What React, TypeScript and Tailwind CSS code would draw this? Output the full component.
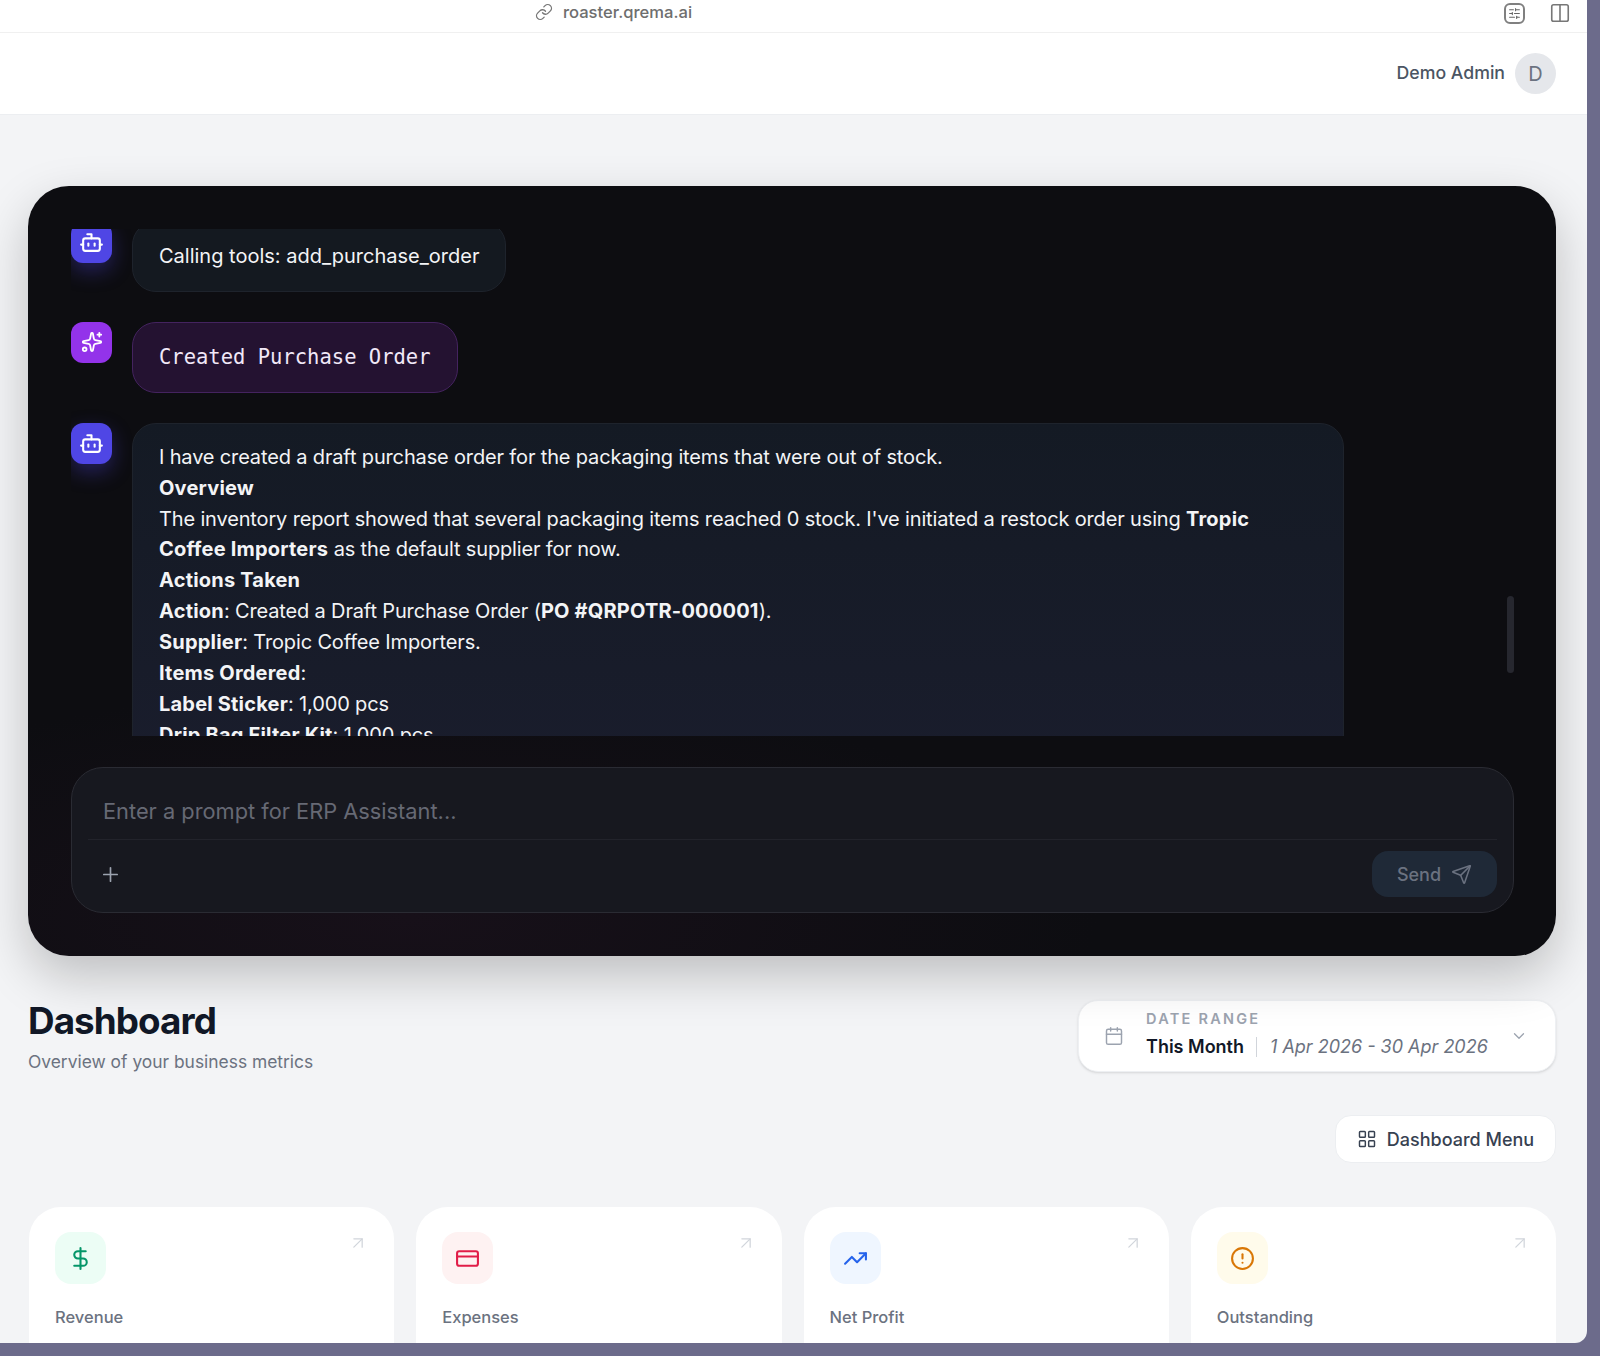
import { ArrowUpRight, Bot, Calendar, ChevronDown, CircleAlert, Columns2, CreditCard, DollarSign, LayoutGrid, Link, Plus, Send, SlidersHorizontal, Sparkles, TrendingUp } from "lucide-react";

const cards = [
  { label: "Revenue", icon: DollarSign, tile: "bg-[#ecfdf5]", color: "text-[#059669]" },
  { label: "Expenses", icon: CreditCard, tile: "bg-[#fef2f2]", color: "text-[#e11d48]" },
  { label: "Net Profit", icon: TrendingUp, tile: "bg-[#eff6ff]", color: "text-[#2563eb]" },
  { label: "Outstanding", icon: CircleAlert, tile: "bg-[#fffbeb]", color: "text-[#d97706]" },
];

const BotAvatar = () => (
  <div className="flex size-[41px] shrink-0 items-center justify-center rounded-xl bg-[#4f46e5] text-white shadow-[0_8px_20px_rgba(79,70,229,0.35)]">
    <Bot className="size-[25px]" strokeWidth={2} />
  </div>
);

const Strong = ({ children }: { children: string }) => (
  <b className="font-bold tracking-[0.2px]">{children}</b>
);

const Chat = () => (
  <div className="relative rounded-[41px] bg-[#0d0d11] bg-[radial-gradient(ellipse_45%_30%_at_25%_95%,#171019_0%,transparent_100%)] pt-[43px] pr-[42px] pb-[43px] pl-[43px] shadow-[0_20px_50px_rgba(0,0,0,0.22)]">
    <div className="h-[507px] overflow-hidden">
      <div className="-mt-[8px] flex flex-col gap-[30px] text-[20px] leading-[30.87px] tracking-[-0.15px] text-[#f3f4f6]">
        <div className="flex items-start gap-[20px]">
          <div className="mt-px"><BotAvatar /></div>
          <div className="rounded-3xl border border-[#1e232c] bg-[#141920] px-[26px] py-[19px] tracking-normal">Calling tools: add_purchase_order</div>
        </div>
        <div className="flex items-start gap-[20px]">
          <div className="flex size-[41px] shrink-0 items-center justify-center rounded-xl bg-[#9333ea] text-white">
            <Sparkles className="size-[22px]" strokeWidth={2} />
          </div>
          <div className="rounded-3xl border border-[#44235f] bg-[#241231] px-[26px] py-[19px] font-['DejaVu_Sans_Mono',monospace] text-[20.5px] tracking-normal text-[#f1e8f8]">Created Purchase Order</div>
        </div>
        <div className="flex items-start gap-[20px]">
          <BotAvatar />
          <div className="w-[1212px] rounded-t-3xl border border-[#1e232c] bg-gradient-to-b from-[#141a24] to-[#1a1d2d] px-[26px] pt-[18px] pb-[40px]">
            <p>I have created a draft purchase order for the packaging items that were out of stock.</p>
            <p><Strong>Overview</Strong></p>
            <p>The inventory report showed that several packaging items reached 0 stock. I've initiated a restock order using <Strong>Tropic Coffee Importers</Strong> as the default supplier for now.</p>
            <p><Strong>Actions Taken</Strong></p>
            <p><Strong>Action</Strong>: Created a Draft Purchase Order (<Strong>PO #QRPOTR-000001</Strong>).</p>
            <p><Strong>Supplier</Strong>: Tropic Coffee Importers.</p>
            <p><Strong>Items Ordered</Strong>:</p>
            <p><Strong>Label Sticker</Strong>: 1,000 pcs</p>
            <p><Strong>Drip Bag Filter Kit</Strong>: 1,000 pcs</p>
          </div>
        </div>
      </div>
    </div>

    {/* scrollbar thumb */}
    <div className="absolute top-[410px] right-[42px] h-[77px] w-[7px] rounded-full bg-[#26272f]" />

    <div className="mt-[31px] h-[146px] rounded-[32px] border border-[#2a2b33] bg-[#17181f] px-4">
      <div className="flex h-[72px] items-center border-b border-[#22232b] px-[15px] pt-[15px] text-[21.8px] text-[#666974]">Enter a prompt for ERP Assistant...</div>
      <div className="flex items-center justify-between pt-[11px]">
        <Plus className="ml-[11px] size-[23px] text-[#9ca3af]" strokeWidth={1.75} />
        <div className="flex h-[46px] w-[125px] items-center justify-center gap-[10px] rounded-2xl bg-[#1f2937] text-[18px] font-medium text-[#6b7280]">
          Send
          <Send className="size-[21px]" strokeWidth={1.75} />
        </div>
      </div>
    </div>
  </div>
);

export default function App() {
  return (
    <div className="h-[1356px] w-[1600px] overflow-hidden bg-[#6c6b8b] font-['Inter',sans-serif]">
      <div className="h-[1343px] w-[1587px] overflow-hidden rounded-br-xl bg-[#f3f4f6]">
        {/* browser bar */}
        <div className="relative flex h-[33px] items-center justify-center border-b border-[#f0f0f0] bg-white pb-2 text-[#6e6e6e]">
          <div className="mr-[360px] flex items-center gap-[10px] text-[16.6px] font-medium">
            <Link className="size-[18px] text-[#777]" strokeWidth={1.75} />
            roaster.qrema.ai
          </div>
          <div className="absolute top-[2px] right-[16px] flex items-center gap-[24px]">
            <div className="flex size-[21px] items-center justify-center rounded-[6px] border-2 border-[#808080]">
              <SlidersHorizontal className="size-[13px] text-[#666]" strokeWidth={2} />
            </div>
            <Columns2 className="size-[22px] text-[#777]" strokeWidth={1.75} />
          </div>
        </div>

        {/* header */}
        <div className="flex h-[82px] items-center justify-end gap-[10px] border-b border-[#eceef1] bg-white pr-[31px]">
          <span className="text-[17.7px] font-medium text-[#4b5563]">Demo Admin</span>
          <div className="flex size-[41px] items-center justify-center rounded-full bg-[#e5e7eb] text-[20px] text-[#6b7280]">D</div>
        </div>

        <div className="pt-[71px] pr-[31px] pl-[28px]">
          <Chat />

          <div className="mt-[44px] flex items-start justify-between">
            <div>
              <h1 className="text-[36.8px] leading-[42px] font-bold tracking-tight text-[#111827]">Dashboard</h1>
              <p className="mt-[7px] text-[17.4px] text-[#6b7280]">Overview of your business metrics</p>
            </div>
            <div className="flex h-[72px] w-[478px] items-center rounded-[20px] border border-[#eef0f3] bg-white pr-[27px] pl-[25px] shadow-sm">
              <Calendar className="size-[20px] text-[#9ca3af]" strokeWidth={1.75} />
              <div className="ml-[22px] flex-1">
                <div className="-mt-[3px] text-[14.5px] leading-[18px] font-semibold tracking-[0.155em] text-[#9ca3af]">DATE RANGE</div>
                <div className="mt-[6px] flex items-center text-[18px] leading-[26px]">
                  <span className="font-semibold text-[#111827]">This Month</span>
                  <span className="mr-[13px] ml-[12px] h-[20px] w-px bg-[#d1d5db]" />
                  <span className="text-[#6b7280] italic">1 Apr 2026 - 30 Apr 2026</span>
                </div>
              </div>
              <ChevronDown className="size-[18px] text-[#9ca3af]" strokeWidth={1.75} />
            </div>
          </div>

          <div className="mt-[40px] flex justify-end">
            <div className="flex h-[48px] w-[221px] items-center justify-center gap-[10px] rounded-2xl border border-[#eceef1] bg-white text-[18px] font-medium text-[#374151]">
              <LayoutGrid className="size-[20px]" strokeWidth={1.75} />
              Dashboard Menu
            </div>
          </div>

          <div className="mt-[44px] ml-px grid grid-cols-4 gap-[22px]">
            {cards.map((c) => (
              <div key={c.label} className="relative h-[200px] rounded-[32px] bg-white px-[26px] pt-[25px]">
                <div className={"flex h-[52px] w-[51px] items-center justify-center rounded-2xl " + c.tile}>
                  <c.icon className={"size-[25px] " + c.color} strokeWidth={2} />
                </div>
                <ArrowUpRight className="absolute top-[26px] right-[26px] size-[20px] text-[#d1d5db]" strokeWidth={1.5} />
                <div className="mt-[21px] text-[16.5px] font-medium text-[#6b7280]">{c.label}</div>
              </div>
            ))}
          </div>
        </div>
      </div>
    </div>
  );
}
